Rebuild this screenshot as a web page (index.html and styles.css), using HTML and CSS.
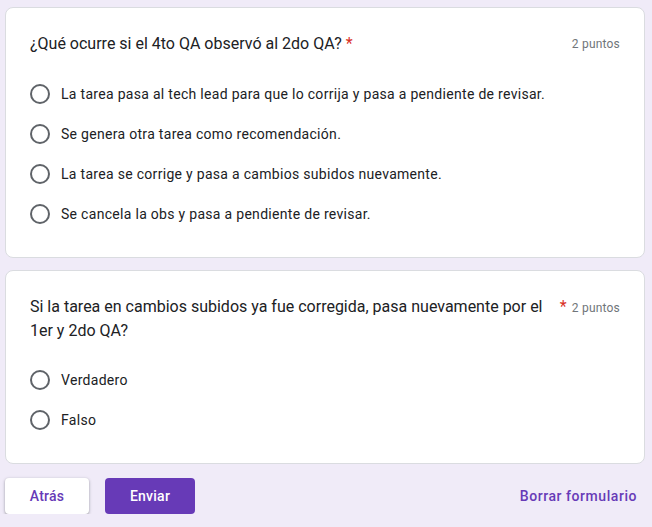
FILE: index.html
```html
<!DOCTYPE html>
<html lang="es">
<head>
<meta charset="utf-8">
<title>Formulario</title>
<link rel="stylesheet" href="styles.css">
</head>
<body>
<main class="page">
  <section class="card">
    <div class="q-head">
      <div class="q-title">¿Qué ocurre si el 4to QA observó al 2do QA? <span class="req">*</span></div>
      <div class="points">2 puntos</div>
    </div>
    <div class="options">
      <label class="option"><span class="radio"></span><span class="opt-text">La tarea pasa al tech lead para que lo corrija y pasa a pendiente de revisar.</span></label>
      <label class="option"><span class="radio"></span><span class="opt-text">Se genera otra tarea como recomendación.</span></label>
      <label class="option"><span class="radio"></span><span class="opt-text">La tarea se corrige y pasa a cambios subidos nuevamente.</span></label>
      <label class="option"><span class="radio"></span><span class="opt-text">Se cancela la obs y pasa a pendiente de revisar.</span></label>
    </div>
  </section>
  <section class="card card-2">
    <div class="q-head">
      <div class="q-title q-title-wrap">Si la tarea en cambios subidos ya fue corregida, pasa nuevamente por el 1er y 2do QA?</div>
      <div class="points"><span class="req req-side">*</span>2 puntos</div>
    </div>
    <div class="options">
      <label class="option"><span class="radio"></span><span class="opt-text">Verdadero</span></label>
      <label class="option"><span class="radio"></span><span class="opt-text">Falso</span></label>
    </div>
  </section>
  <div class="actions">
    <button class="btn btn-back">Atrás</button>
    <button class="btn btn-send">Enviar</button>
    <button class="btn-clear">Borrar formulario</button>
  </div>
</main>
</body>
</html>
```
FILE: styles.css
```css
html, body {
  margin: 0;
  padding: 0;
  background: #f0ebf8;
  font-family: Roboto, "Liberation Sans", Arial, sans-serif;
  color: #202124;
}
.page {
  padding: 7px 7px 0 5px;
  display: flex;
  flex-direction: column;
  gap: 12px;
}
.card {
  background: #fff;
  border: 1px solid #dadce0;
  border-radius: 8px;
  padding: 24px 24px 23px 24px;
}
.q-head {
  display: flex;
  align-items: flex-start;
  justify-content: space-between;
  margin-bottom: 18px;
}
.q-title {
  font-size: 16px;
  line-height: 24px;
  letter-spacing: 0;
}
.q-title-wrap {
  max-width: 520px;
}
.card-2 .q-head {
  margin-bottom: 17px;
}
.req {
  color: #d93025;
}
.points {
  font-size: 12px;
  line-height: 24px;
  color: #70757a;
  letter-spacing: 0.2px;
  white-space: nowrap;
}
.req-side {
  font-size: 16px;
  margin-right: 5px;
}
.options {
  display: flex;
  flex-direction: column;
}
.option {
  display: flex;
  align-items: center;
  height: 40px;
  font-size: 14px;
  letter-spacing: 0.3px;
}
.radio {
  box-sizing: border-box;
  width: 20px;
  height: 20px;
  border: 2px solid #5f6368;
  border-radius: 50%;
  margin-right: 11px;
  flex: none;
}
.actions {
  display: flex;
  align-items: center;
  padding-top: 2px;
  gap: 16px;
}
.btn {
  font-family: Roboto, "Liberation Sans", Arial, sans-serif;
  font-size: 14px;
  font-weight: 500;
  letter-spacing: 0.25px;
  height: 36px;
  border-radius: 4px;
  border: none;
  cursor: pointer;
}
.btn-back {
  width: 84px;
  background: #fff;
  color: #673ab7;
  box-shadow: 0 1px 2px rgba(60,64,67,0.3), 0 1px 3px 1px rgba(60,64,67,0.15);
}
.btn-send {
  width: 90px;
  background: #673ab7;
  color: #fff;
}
.btn-clear {
  margin-left: auto;
  margin-right: 8px;
  background: none;
  border: none;
  padding: 0;
  font-family: Roboto, "Liberation Sans", Arial, sans-serif;
  font-size: 14px;
  font-weight: 500;
  letter-spacing: 0.55px;
  color: #673ab7;
}
```
